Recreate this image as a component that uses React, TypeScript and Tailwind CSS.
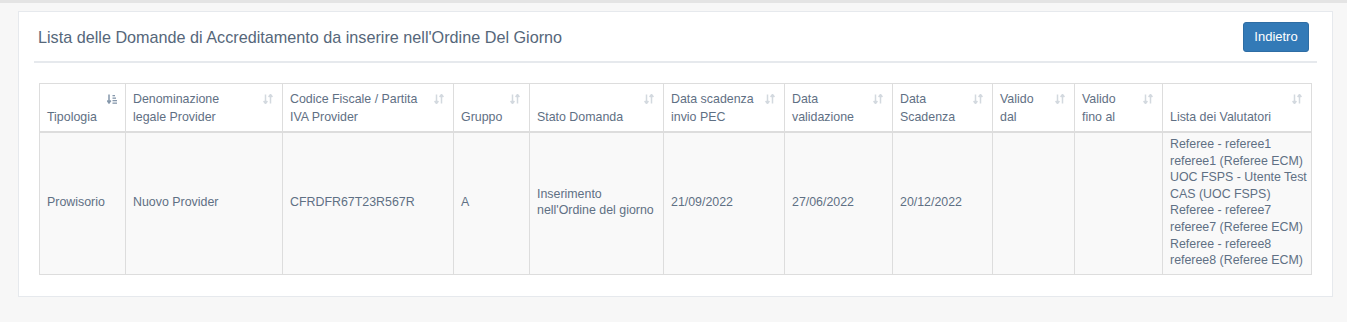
import React from 'react';

const SortIcon: React.FC<{ active?: boolean }> = ({ active }) => {
  if (active) {
    return (
      <svg width="10" height="10" viewBox="0 0 10 10" className="absolute right-[8px] top-[10px]">
        <path d="M2 0.5 V8.5 M0.2 6.5 L2 9 L3.8 6.5" fill="none" stroke="#8597ab" strokeWidth="1.5" />
        <rect x="5.5" y="1" width="2.5" height="1.3" fill="#8597ab" />
        <rect x="5.5" y="3.5" width="3.5" height="1.3" fill="#8597ab" />
        <rect x="5.5" y="6" width="4.5" height="1.3" fill="#8597ab" />
        <rect x="5.5" y="8.5" width="4.5" height="1.3" fill="#8597ab" />
      </svg>
    );
  }
  return (
    <svg width="10" height="10" viewBox="0 0 10 10" className="absolute right-[9px] top-[10px]">
      <path d="M2.5 0.5 V9 M0.6 7 L2.5 9.5 L4.4 7" fill="none" stroke="#d3d9df" strokeWidth="1.5" />
      <path d="M7.5 9.5 V1 M5.6 3 L7.5 0.5 L9.4 3" fill="none" stroke="#d3d9df" strokeWidth="1.5" />
    </svg>
  );
};

const COLS: { w: number; label: React.ReactNode }[] = [
  { w: 86, label: 'Tipologia' },
  { w: 157, label: <>Denominazione<br />legale Provider</> },
  { w: 171, label: <>Codice Fiscale / Partita<br />IVA Provider</> },
  { w: 76, label: 'Gruppo' },
  { w: 134, label: 'Stato Domanda' },
  { w: 121, label: <>Data scadenza<br />invio PEC</> },
  { w: 108, label: <>Data<br />validazione</> },
  { w: 100, label: <>Data<br />Scadenza</> },
  { w: 82, label: <>Valido<br />dal</> },
  { w: 88, label: <>Valido<br />fino al</> },
  { w: 149, label: 'Lista dei Valutatori' },
];

const ROW: React.ReactNode[] = [
  'Prowisorio',
  'Nuovo Provider',
  'CFRDFR67T23R567R',
  'A',
  <>Inserimento<br />nell'Ordine del giorno</>,
  '21/09/2022',
  '27/06/2022',
  '20/12/2022',
  '',
  '',
  <>
    Referee - referee1<br />referee1 (Referee ECM)<br />UOC FSPS - Utente Test<br />CAS (UOC FSPS)<br />
    Referee - referee7<br />referee7 (Referee ECM)<br />Referee - referee8<br />referee8 (Referee ECM)
  </>,
];

export default function App() {
  return (
    <div
      className="min-h-[322px] bg-[#f7f7f7] text-[#5f7084]"
      style={{ fontFamily: '"Liberation Sans", Arial, sans-serif' }}
    >
      <div className="h-[3px] bg-[#e4e4e4]" />
      <div className="ml-[18px] mt-[8px] w-[1315px] border border-[#e6e9ed] bg-white px-[15px] pt-[10px] pb-[21px]">
        {/* Title bar */}
        <div className="flex items-start justify-between border-b-2 border-[#e6e9ed] pl-[4px] pr-[8px] h-[41px]">
          <h2 className="mt-[5px] text-[16.2px] font-normal leading-[20px] text-[#56677a]">
            Lista delle Domande di Accreditamento da inserire nell'Ordine Del Giorno
          </h2>
          <button className="h-[30px] w-[66px] rounded-[3px] border border-[#2e6da4] bg-[#337ab7] text-[13px] text-white">
            Indietro
          </button>
        </div>

        {/* Table */}
        <div className="mt-[20px] px-[5px]">
          <table className="table-fixed border-collapse text-[12.4px]" style={{ width: 1273 }}>
            <colgroup>
              {COLS.map((c, i) => (
                <col key={i} style={{ width: c.w }} />
              ))}
            </colgroup>
            <thead>
              <tr>
                {COLS.map((c, i) => (
                  <th
                    key={i}
                    className="relative whitespace-nowrap border border-b-2 border-[#dddddd] bg-white pl-[7px] pr-[20px] pt-[6px] pb-[5px] text-left align-bottom font-normal leading-[18px] text-[#5f7084]"
                  >
                    {c.label}
                    <SortIcon active={i === 0} />
                  </th>
                ))}
              </tr>
            </thead>
            <tbody>
              <tr className="bg-[#f9f9f9]">
                {ROW.map((v, i) => (
                  <td
                    key={i}
                    className="whitespace-nowrap border border-[#dddddd] pl-[7px] pr-[8px] pt-[3px] pb-[5px] align-middle leading-[16.6px]"
                  >
                    {v}
                  </td>
                ))}
              </tr>
            </tbody>
          </table>
        </div>
      </div>
    </div>
  );
}
